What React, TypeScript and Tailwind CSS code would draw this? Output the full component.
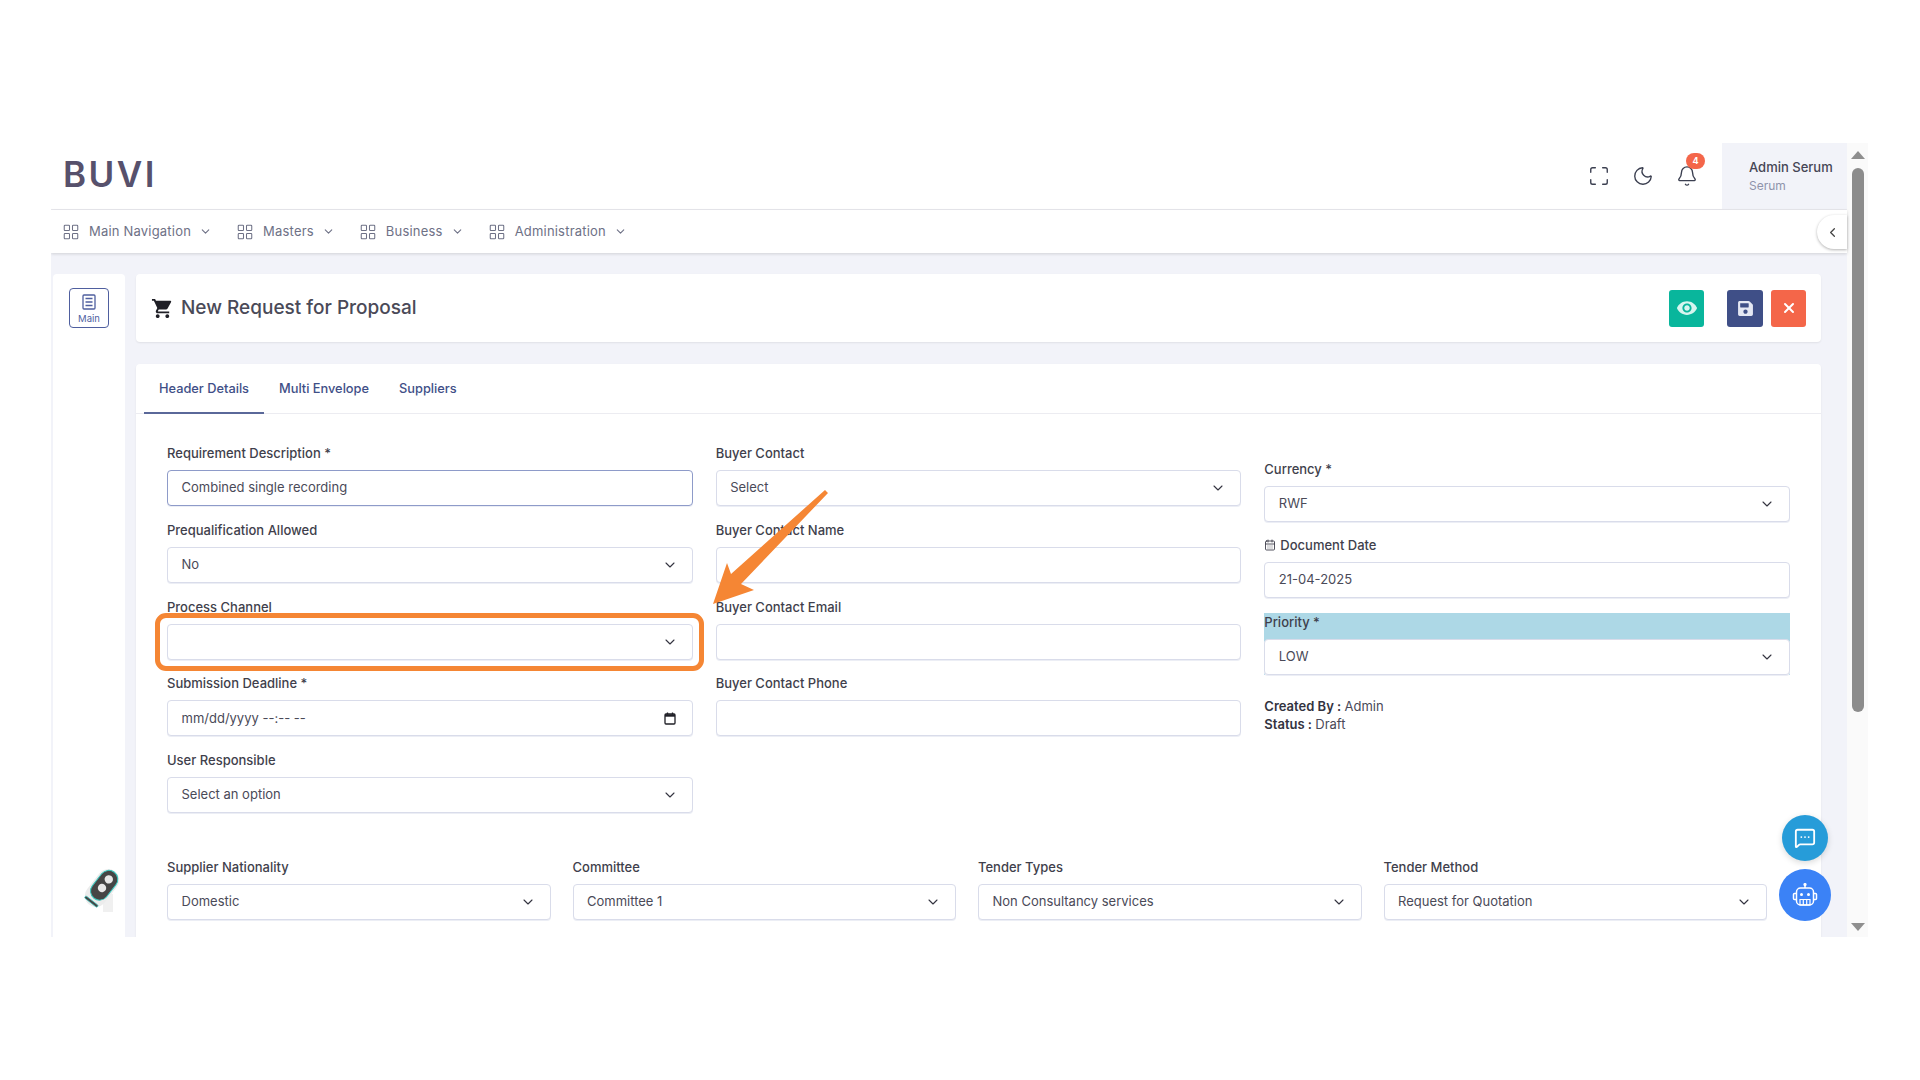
import { Bell, CalendarDays, ChevronDown, ChevronLeft, LayoutGrid, Maximize, MessageSquareMore, Moon, X } from "lucide-react";
import { FaSave } from "react-icons/fa";
import { MdShoppingCart, MdVisibility } from "react-icons/md";

const NAV_ITEMS = ["Main Navigation", "Masters", "Business", "Administration"];

function NavItem({ label }: { label: string }) {
  return (
    <div className="flex items-center mr-[24px] text-[13px] text-[#6e7186] tracking-[0.2px]">
      <LayoutGrid className="w-[18px] h-[18px] mr-[9px]" strokeWidth={1.4} />
      <span>{label}</span>
      <ChevronDown className="w-[13px] h-[13px] ml-[8px]" strokeWidth={2} />
    </div>
  );
}

function Field({
  label,
  value,
  select,
  focused,
  className = "",
}: {
  label: string;
  value?: string;
  select?: boolean;
  focused?: boolean;
  className?: string;
}) {
  return (
    <div className={`mb-[13.8px] ${className}`}>
      <div className="h-[20px] mb-[7px] text-[13px] leading-[20px] font-medium text-[#3f3f4c]">{label}</div>
      <Box value={value} select={select} focused={focused} />
    </div>
  );
}

function Box({ value, select, focused }: { value?: string; select?: boolean; focused?: boolean }) {
  return (
    <div
      className={`flex items-center justify-between h-[36px] pl-[13.5px] pr-[14px] bg-white rounded-[4px] border text-[13px] text-[#4a4a58] shadow-[0_1px_0_#eceef5] ${
        focused ? "border-[#8e9bc9]" : "border-[#d9dcea]"
      }`}
    >
      <span>{value}</span>
      {select && <ChevronDown className="w-[16px] h-[16px] text-[#33333f]" strokeWidth={1.6} />}
    </div>
  );
}

function RemoteIcon() {
  return (
    <svg viewBox="0 0 40 46" className="w-[40px] h-[46px]">
      <rect x="21" y="26" width="10" height="18" fill="#f0f0f0" />
      <g transform="rotate(38 20 20)">
        <rect x="9" y="-1" width="22" height="42" rx="11" fill="#ececec" />
        <rect x="11" y="0" width="18" height="33" rx="9" fill="#454545" stroke="#3cc6bd" strokeWidth="1" />
        <circle cx="20" cy="9" r="4.2" fill="#e8e8e8" />
        <circle cx="20" cy="20" r="4.2" fill="#e8e8e8" />
        <rect x="12" y="36" width="16" height="2.6" rx="1.3" fill="#454545" stroke="#3cc6bd" strokeWidth="0.7" />
      </g>
    </svg>
  );
}

function RobotIcon() {
  return (
    <svg viewBox="0 0 26 24" className="w-[26px] h-[24px]" fill="none" stroke="white" strokeWidth="1.5">
      <rect x="4.5" y="5" width="17" height="17" rx="4" />
      <path d="M13 5V2" />
      <circle cx="13" cy="1.6" r="0.9" fill="white" />
      <path d="M4.5 10.5H2.5a1 1 0 0 0-1 1v4a1 1 0 0 0 1 1h2M21.5 10.5h2a1 1 0 0 1 1 1v4a1 1 0 0 1-1 1h-2" />
      <circle cx="9.5" cy="11.5" r="1.5" fill="white" stroke="none" />
      <circle cx="16.5" cy="11.5" r="1.5" fill="white" stroke="none" />
      <path d="M8 16.5h10v5.5H8zM11.3 16.5V22M14.7 16.5V22" strokeWidth="1.2" />
    </svg>
  );
}

export default function App() {
  return (
    <div className="relative h-[1080px] bg-white overflow-hidden font-['Inter','Liberation_Sans',sans-serif]">
      <div className="pt-[143px] pl-[51px]">
        <div className="flex w-[1817px] h-[794px] overflow-hidden">
          <div className="relative flex flex-col w-[1796px]">
            {/* top bar */}
            <header className="flex items-stretch justify-between h-[67px] border-b border-[#e9e9ee] bg-white shrink-0">
              <div className="pl-[12px] pt-[10px] text-[35px] leading-[42px] font-semibold tracking-[2.5px] text-[#57516c]">BUVI</div>
              <div className="flex items-stretch">
                <div className="flex items-center gap-[22px] mr-[24px] text-[#3b3f50]">
                  <Maximize className="w-[22px] h-[22px]" strokeWidth={1.5} />
                  <Moon className="w-[22px] h-[22px]" strokeWidth={1.5} />
                  <div className="relative">
                    <Bell className="w-[22px] h-[22px]" strokeWidth={1.5} />
                    <span className="absolute -top-[12px] left-[10px] w-[19px] h-[16px] rounded-full bg-[#f4664a] text-white text-[9px] leading-[16px] font-bold text-center">4</span>
                  </div>
                </div>
                <div className="w-[125px] bg-[#f2f3f9] pl-[27px] pt-[14px]">
                  <div className="text-[13px] leading-[20px] font-medium text-[#454555]">Admin Serum</div>
                  <div className="text-[12px] leading-[18px] text-[#8f93ab]">Serum</div>
                </div>
              </div>
            </header>

            {/* menu */}
            <nav className="flex items-center h-[43px] pl-[11px] bg-white shadow-[0_1px_3px_rgba(0,0,0,0.14)] z-10 shrink-0">
              {NAV_ITEMS.map((item) => (
                <NavItem key={item} label={item} />
              ))}
            </nav>
            <button className="absolute z-20 right-0 top-[72px] w-[30px] h-[34px] rounded-l-full bg-white shadow-[0_1px_3px_rgba(0,0,0,0.3)] flex items-center justify-center text-[#444]">
              <ChevronLeft className="w-[15px] h-[15px] ml-[1px]" strokeWidth={2} />
            </button>

            {/* body */}
            <div className="flex flex-1 min-h-0 gap-[11px] bg-[#f2f3f9] pl-[2px] pt-[21px]">
              <aside className="flex flex-col items-center w-[72px] bg-white rounded-t-[4px] pt-[14px] pb-[23px]">
                <div className="flex flex-col items-center w-[40px] h-[40px] rounded-[4px] border border-[#4f5f9f] pt-[5px] text-[#4f5f9f]">
                  <svg viewBox="0 0 14 16" className="w-[14px] h-[16px]" fill="none" stroke="currentColor" strokeWidth="1.3">
                    <rect x="1" y="1" width="12" height="14" rx="1" />
                    <path d="M3.5 4.5h7M3.5 8h7M3.5 11.5h7" />
                  </svg>
                  <span className="text-[9.5px] leading-[14px] mt-[2px]">Main</span>
                </div>
                <div className="mt-auto ml-[25px]">
                  <RemoteIcon />
                </div>
              </aside>

              <main className="flex flex-col w-[1685px]">
                <div className="flex items-center justify-between h-[68px] shrink-0 bg-white rounded-[4px] shadow-[0_1px_2px_rgba(0,0,0,0.08)] pl-[15px] pr-[15px]">
                  <div className="flex items-center gap-[7px] text-[#1f1f26]">
                    <MdShoppingCart className="w-[23px] h-[23px]" />
                    <span className="text-[19px] font-medium text-[#4a4a58]">New Request for Proposal</span>
                  </div>
                  <div className="flex items-center">
                    <button className="flex items-center justify-center w-[35px] h-[37px] mr-[23px] rounded-[3px] bg-[#09b69c] text-[#d6f5ef]">
                      <MdVisibility className="w-[22px] h-[22px]" />
                    </button>
                    <button className="flex items-center justify-center w-[36px] h-[37px] mr-[8px] rounded-[3px] bg-[#3f4f87] text-[#e4e7f3]">
                      <FaSave className="w-[17px] h-[17px]" />
                    </button>
                    <button className="flex items-center justify-center w-[35px] h-[37px] rounded-[3px] bg-[#f46649] text-white">
                      <X className="w-[16px] h-[16px]" strokeWidth={3} />
                    </button>
                  </div>
                </div>

                <div className="flex-1 mt-[22px] bg-white rounded-t-[4px] shadow-[0_1px_2px_rgba(0,0,0,0.08)]">
                  <div className="flex h-[50px] pl-[8px] border-b border-[#ececf1] text-[12.8px] font-medium text-[#3f4f87]">
                    <div className="px-[15px] pt-[15px] border-b-2 border-[#5a6899] h-[50px]">Header Details</div>
                    <div className="px-[15px] pt-[15px]">Multi Envelope</div>
                    <div className="px-[15px] pt-[15px]">Suppliers</div>
                  </div>

                  <div className="pt-[29px] pl-[31px] pr-[31px]">
                    <div className="grid grid-cols-3 gap-x-[23px]">
                      <div>
                        <Field label="Requirement Description *" value="Combined single recording" focused />
                        <Field label="Prequalification Allowed" value="No" select />
                        <Field label="Process Channel" select />
                        <div className="mb-[13.8px]">
                          <div className="h-[20px] mb-[7px] text-[13px] leading-[20px] font-medium text-[#3f3f4c]">Submission Deadline *</div>
                          <div className="flex items-center justify-between h-[36px] pl-[13.5px] pr-[16px] bg-white rounded-[4px] border border-[#d9dcea] text-[13px] text-[#4a4a58] shadow-[0_1px_0_#eceef5]">
                            <span>mm/dd/yyyy --:-- --</span>
                            <svg viewBox="0 0 12 13" className="w-[12px] h-[13px]" fill="none" stroke="#1f1f26" strokeWidth="1.3">
                              <rect x="1" y="2" width="10" height="10" rx="1" />
                              <path d="M1 3.5h10" strokeWidth="2.4" />
                              <path d="M3.5 0.5v2M8.5 0.5v2" />
                            </svg>
                          </div>
                        </div>
                        <Field label="User Responsible" value="Select an option" select />
                      </div>
                      <div>
                        <Field label="Buyer Contact" value="Select" select />
                        <Field label="Buyer Contact Name" />
                        <Field label="Buyer Contact Email" />
                        <Field label="Buyer Contact Phone" />
                      </div>
                      <div className="pt-[16px]">
                        <Field label="Currency *" value="RWF" select />
                        <div className="mb-[15px]">
                          <div className="flex items-center gap-[4px] h-[18px] mb-[8px] text-[13px] leading-[18px] font-medium text-[#3f3f4c]">
                            <CalendarDays className="w-[12px] h-[12px]" strokeWidth={1.8} />
                            <span>Document Date</span>
                          </div>
                          <Box value="21-04-2025" />
                        </div>
                        <div className="bg-[#add8e6]">
                          <div className="h-[26px] text-[13px] leading-[18px] font-medium text-[#3f3f4c]">Priority *</div>
                          <Box value="LOW" select />
                        </div>
                        <div className="mt-[22px] text-[13px] leading-[18px] text-[#4a4a58]">
                          <div>
                            <span className="font-semibold text-[#33333f]">Created By : </span>Admin
                          </div>
                          <div>
                            <span className="font-semibold text-[#33333f]">Status : </span>Draft
                          </div>
                        </div>
                      </div>
                    </div>

                    <div className="grid grid-cols-4 gap-x-[22px] w-[1600px] mt-[30px]">
                      <Field label="Supplier Nationality" value="Domestic" select />
                      <Field label="Committee" value="Committee 1" select />
                      <Field label="Tender Types" value="Non Consultancy services" select />
                      <Field label="Tender Method" value="Request for Quotation" select />
                    </div>
                  </div>
                </div>
              </main>
            </div>
          </div>

          {/* scroll bar */}
          <div className="flex flex-col items-center w-[21px] bg-[#fafafa]">
            <div className="mt-[8px] w-0 h-0 border-x-[7px] border-x-transparent border-b-[8px] border-b-[#8f8f8f]" />
            <div className="mt-[9px] w-[12px] h-[544px] rounded-full bg-[#8c8c8c]" />
            <div className="mt-auto mb-[6px] w-0 h-0 border-x-[7px] border-x-transparent border-t-[8px] border-t-[#8f8f8f]" />
          </div>
        </div>
      </div>

      {/* floating help buttons */}
      <button className="absolute left-[1782px] top-[815px] flex items-center justify-center w-[46px] h-[46px] rounded-full bg-[#269cd9] text-white shadow-[0_2px_6px_rgba(0,0,0,0.15)]">
        <MessageSquareMore className="w-[22px] h-[22px]" strokeWidth={2} />
      </button>
      <button className="absolute left-[1779px] top-[869px] flex items-center justify-center w-[52px] h-[52px] rounded-full bg-[#3b82f6]">
        <RobotIcon />
      </button>

      {/* orange annotation */}
      <div className="absolute left-[155px] top-[613px] w-[549px] h-[58px] rounded-[11px] border-[5px] border-[#f58634]" />
      <svg className="absolute left-0 top-0 w-[1920px] h-[1080px] pointer-events-none" viewBox="0 0 1920 1080">
        <polygon points="713,604 727,563 731,574 825,490 828,493 741,584 754,590" fill="#f58634" />
      </svg>
    </div>
  );
}
